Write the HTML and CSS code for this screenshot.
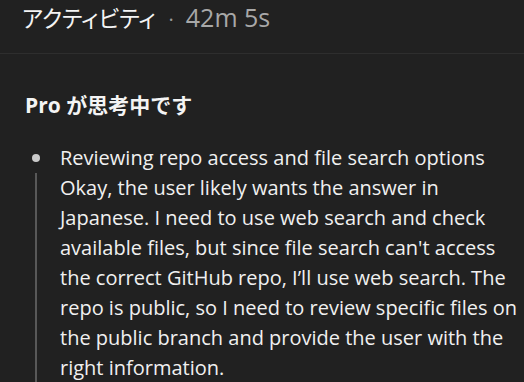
FILE: index.html
```html
<!DOCTYPE html>
<html lang="ja">
<head>
<meta charset="utf-8">
<link rel="stylesheet" href="styles.css">
</head>
<body>
<header class="top">
  <span class="title">アクティビティ</span>
  <span class="dot">·</span>
  <span class="time">42m 5s</span>
</header>
<main class="panel">
  <h2 class="heading">Pro <span class="ja">が思考中です</span></h2>
  <div class="step">
    <div class="rail">
      <span class="bullet"></span>
      <span class="line"></span>
    </div>
    <p class="text">Reviewing repo access and file search options Okay, the user likely wants the answer in Japanese. I need to use web search and check available files, but since file search can't access the correct GitHub repo, I’ll use web search. The repo is public, so I need to review specific files on the public branch and provide the user with the right information.</p>
  </div>
</main>
</body>
</html>
```
FILE: styles.css
```css
html, body {
  margin: 0;
  padding: 0;
  background: #212121;
  height: 100%;
  overflow: hidden;
}
body {
  font-family: "Open Sans", "Noto Sans CJK JP", sans-serif;
  color: #ececec;
}
.top {
  display: flex;
  align-items: baseline;
  height: 54px;
  padding: 0 0 0 22px;
  border-bottom: 1px solid #2e2e2e;
  box-sizing: border-box;
  line-height: 34px;
}
.title {
  font-family: "Noto Sans CJK JP", sans-serif;
  font-feature-settings: "palt";
  font-size: 22.5px;
  color: #f4f4f4;
}
.dot {
  font-size: 20px;
  color: #9a9a9a;
  margin: 0 12px 0 13px;
}
.time {
  font-size: 25px;
  color: #a8a8a8;
}
.panel {
  padding: 36px 0 0 25px;
}
.heading {
  margin: 0;
  font-weight: 700;
  font-size: 21px;
  line-height: 28px;
  color: #f4f4f4;
}
.heading .ja {
  font-family: "Noto Sans CJK JP", sans-serif;
  font-weight: 700;
  font-size: 21px;
}
.step {
  display: flex;
  margin-top: 24px;
}
.rail {
  width: 35px;
  flex: none;
  display: flex;
  flex-direction: column;
  align-items: flex-start;
  padding-top: 11px;
}
.bullet {
  width: 8px;
  height: 8px;
  border-radius: 50%;
  background: #cacaca;
  margin-left: 7px;
}
.line {
  width: 2px;
  flex: 1;
  background: #585858;
  margin-top: 11px;
  margin-left: 10px;
}
.text {
  flex: 1;
  margin: 0;
  padding-right: 6px;
  font-size: 20px;
  line-height: 30px;
  color: #f0f0f0;
}
```
